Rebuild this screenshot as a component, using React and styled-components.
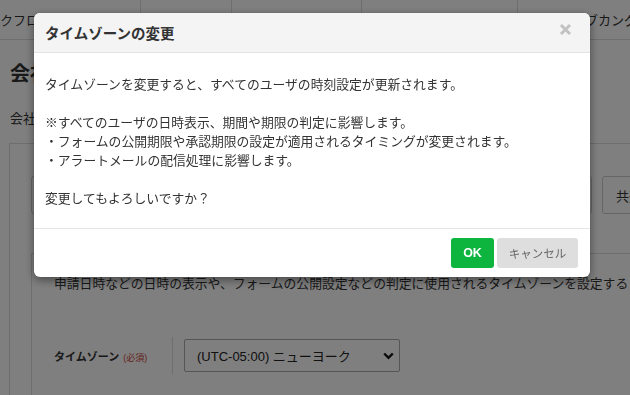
import React from "react";
import styled, { createGlobalStyle } from "styled-components";

const Global = createGlobalStyle`
  html, body { margin: 0; padding: 0; background: #fff; }
  body {
    font-family: "Liberation Sans", "Noto Sans CJK JP", sans-serif;
    color: #333;
    width: 630px;
    height: 395px;
    overflow: hidden;
  }
  * { box-sizing: border-box; }
`;

const Page = styled.div`
  width: 630px;
  height: 395px;
  overflow: hidden;
  background: #fff;
`;

const TabBar = styled.div`
  display: flex;
  height: 40px;
  border-bottom: 1px solid #ddd;
  white-space: nowrap;
`;

const Tab = styled.div`
  flex: 0 0 ${(p) => p.$w}px;
  display: flex;
  align-items: center;
  padding-left: ${(p) => p.$pl || 0}px;
  border-right: ${(p) => (p.$last ? "none" : "1px solid #ddd")};
  font-size: 13px;
  color: #333;
  overflow: hidden;
`;

const Heading = styled.h1`
  margin: 22px 0 0 10px;
  font-size: 20px;
  line-height: 24px;
  font-weight: bold;
  color: #333;
  white-space: nowrap;
`;

const Lead = styled.p`
  margin: 23px 0 0 10px;
  font-size: 13px;
  line-height: 19px;
  white-space: nowrap;
`;

const Panel = styled.div`
  margin: 15px 0 0 9px;
  border-top: 1px solid #ddd;
  border-left: 1px solid #ddd;
  padding: 32px 0 0 21px;
  height: 260px;
`;

const SubTabs = styled.div`
  display: flex;
  gap: 10px;
  white-space: nowrap;
`;

const SubTab = styled.div`
  flex: 0 0 ${(p) => p.$w}px;
  height: 38px;
  border: 1px solid #ccc;
  border-radius: 3px;
  display: flex;
  align-items: center;
  padding-left: 13px;
  font-size: 13px;
  color: #333;
`;

const Section = styled.div`
  margin-top: 39px;
  border-top: 1px solid #ddd;
  border-left: 1px solid #ddd;
  padding: 20px 0 0 22px;
  height: 200px;
`;

const Desc = styled.p`
  margin: 0;
  font-size: 12.8px;
  line-height: 20px;
  white-space: nowrap;
`;

const FieldRow = styled.div`
  display: flex;
  align-items: center;
  margin-top: 43px;
  height: 37px;
`;

const FieldLabel = styled.div`
  width: 118px;
  display: flex;
  align-items: baseline;
  gap: 4px;
  font-size: 11px;
  font-weight: bold;
  color: #333;
  white-space: nowrap;
`;

const Required = styled.span`
  font-size: 9px;
  font-weight: normal;
  color: #c8463a;
`;

const Divider = styled.div`
  width: 1px;
  align-self: stretch;
  background: #ddd;
  margin-right: 11px;
`;

const SelectBox = styled.div`
  width: 216px;
  height: 33px;
  border: 1px solid #aaa;
  border-radius: 2px;
  display: flex;
  align-items: center;
  justify-content: space-between;
  padding: 0 5px 0 12px;
  font-size: 13px;
  color: #222;
  white-space: nowrap;
`;

const Overlay = styled.div`
  position: fixed;
  inset: 0;
  background: rgba(0, 0, 0, 0.5);
  display: flex;
  align-items: flex-start;
  padding: 13px 0 0 34px;
`;

const Modal = styled.div`
  width: 556px;
  background: #fff;
  border-radius: 6px;
  box-shadow: 0 3px 10px rgba(0, 0, 0, 0.45);
  overflow: hidden;
`;

const ModalHeader = styled.div`
  height: 40px;
  background: #f4f4f4;
  border-bottom: 1px solid #e3e3e3;
  display: flex;
  align-items: center;
  padding: 0 18px 0 11px;
`;

const Title = styled.h2`
  flex: 1;
  margin: 0;
  font-size: 14.5px;
  font-weight: bold;
  color: #333;
  letter-spacing: 0;
`;

const Close = styled.button`
  align-self: flex-start;
  margin-top: 10px;
  width: 13px;
  height: 13px;
  padding: 0;
  border: none;
  background: none;
  display: flex;
  cursor: pointer;
`;

const ModalBody = styled.div`
  padding: 22px 11px 20px;
  font-size: 12.8px;
  line-height: 19px;
  color: #333;
`;

const Line = styled.div`
  height: 19px;
  white-space: nowrap;
`;

const ModalFooter = styled.div`
  border-top: 1px solid #e5e5e5;
  padding: 9px 12px;
  display: flex;
  justify-content: flex-end;
  gap: 3px;
`;

const Button = styled.button`
  height: 30px;
  width: ${(p) => p.$w}px;
  border: none;
  border-radius: 3px;
  font-family: "Liberation Sans", "Noto Sans CJK JP", sans-serif;
  font-size: ${(p) => (p.$primary ? "12.5px" : "11.5px")};
  font-weight: ${(p) => (p.$primary ? "bold" : "normal")};
  color: ${(p) => (p.$primary ? "#fff" : "#666")};
  background: ${(p) => (p.$primary ? "#0db53f" : "#dedede")};
  cursor: pointer;
`;

const Chevron = () => (
  <svg width="11" height="8" viewBox="0 0 11 8">
    <path d="M1.2 1.5 L5.5 5.8 L9.8 1.5" fill="none" stroke="#111" strokeWidth="2.4" />
  </svg>
);

const CloseIcon = () => (
  <svg width="13" height="13" viewBox="0 0 13 13">
    <path d="M2 2 L11 11 M11 2 L2 11" stroke="#c2c2c2" strokeWidth="3" />
  </svg>
);

export default function App() {
  const lines = [
    "タイムゾーンを変更すると、すべてのユーザの時刻設定が更新されます。",
    "",
    "※すべてのユーザの日時表示、期間や期限の判定に影響します。",
    "・フォームの公開期限や承認期限の設定が適用されるタイミングが変更されます。",
    "・アラートメールの配信処理に影響します。",
    "",
    "変更してもよろしいですか？",
  ];
  return (
    <>
      <Global />
      <Page>
        <TabBar>
          <Tab $w={141}>クフロー</Tab>
          <Tab $w={91} $pl={20}>申請フォーム</Tab>
          <Tab $w={130} $pl={20}>ユーザ管理</Tab>
          <Tab $w={156} $pl={20}>共通設定</Tab>
          <Tab $w={112} $pl={41} $last>ジョブカングループ</Tab>
        </TabBar>
        <Heading>会社設定</Heading>
        <Lead>会社全体に関する設定を行います。</Lead>
        <Panel>
          <SubTabs>
            <SubTab $w={270}>基本設定</SubTab>
            <SubTab $w={281}>個別設定</SubTab>
            <SubTab $w={110}>共通設定</SubTab>
          </SubTabs>
          <Section>
            <Desc>
              申請日時などの日時の表示や、フォームの公開設定などの判定に使用されるタイムゾーンを設定する
            </Desc>
            <FieldRow>
              <FieldLabel>
                タイムゾーン<Required>(必須)</Required>
              </FieldLabel>
              <Divider />
              <SelectBox>
                <span>(UTC-05:00) ニューヨーク</span>
                <Chevron />
              </SelectBox>
            </FieldRow>
          </Section>
        </Panel>
      </Page>
      <Overlay>
        <Modal>
          <ModalHeader>
            <Title>タイムゾーンの変更</Title>
            <Close aria-label="閉じる">
              <CloseIcon />
            </Close>
          </ModalHeader>
          <ModalBody>
            {lines.map((l, i) => (
              <Line key={i}>{l}</Line>
            ))}
          </ModalBody>
          <ModalFooter>
            <Button $primary $w={43}>OK</Button>
            <Button $w={81}>キャンセル</Button>
          </ModalFooter>
        </Modal>
      </Overlay>
    </>
  );
}
